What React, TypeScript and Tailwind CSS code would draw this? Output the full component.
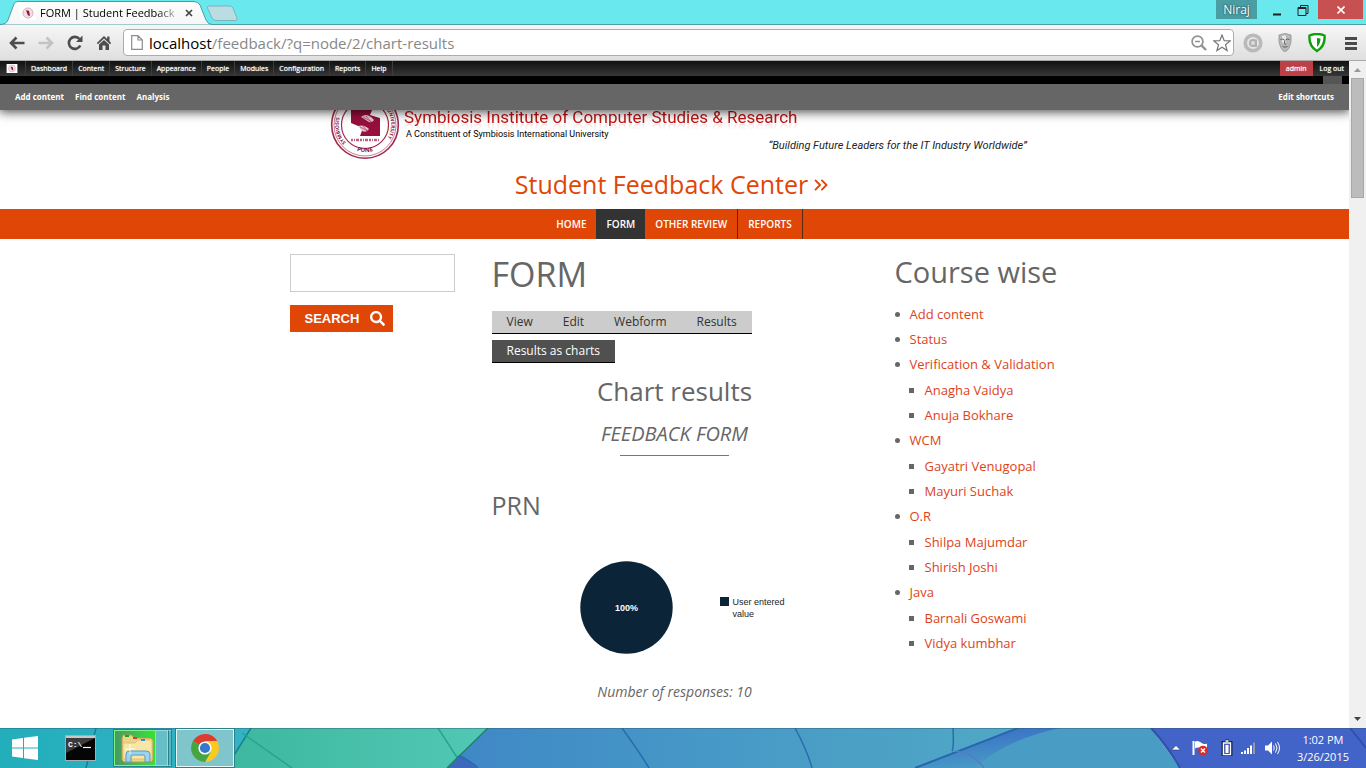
import { ChevronsRight } from "lucide-react";
import { FaSearch } from "react-icons/fa";

const adminLinks = ["Dashboard", "Content", "Structure", "Appearance", "People", "Modules", "Configuration", "Reports", "Help"];

const courses: { name: string; staff?: string[] }[] = [
  { name: "Add content" },
  { name: "Status" },
  { name: "Verification & Validation", staff: ["Anagha Vaidya", "Anuja Bokhare"] },
  { name: "WCM", staff: ["Gayatri Venugopal", "Mayuri Suchak"] },
  { name: "O.R", staff: ["Shilpa Majumdar", "Shirish Joshi"] },
  { name: "Java", staff: ["Barnali Goswami", "Vidya kumbhar"] },
];

function Crest({ className }: { className: string }) {
  return (
    <svg className={className} viewBox="0 0 12 10" aria-hidden="true">
      <rect width="12" height="10" fill="#fff" />
      <circle cx="6" cy="5" r="3.8" fill="#f0dfe4" stroke="#caa3b0" strokeWidth=".6" />
      <path d="M4.500 3l2.200.3.8 3.700-1.500-.2z" fill="#8a1238" />
    </svg>
  );
}

function TabStrip() {
  return (
    <div className="relative flex h-6 shrink-0 justify-between bg-[#69e8ee]">
      <svg className="absolute left-0 top-0" width="240" height="25" aria-hidden="true">
        <defs>
          <linearGradient id="tab" x2="0" y2="1">
            <stop stopColor="#fdfdfd" />
            <stop offset="1" stopColor="#f6f6f6" />
          </linearGradient>
        </defs>
        <path d="M0 25V24.500Q6 24.500 8 20L14 4Q15 1.500 18 1.500H194Q198 1.500 200 5L206 20Q208 24.500 212 24.500V25z" fill="url(#tab)" stroke="#4d9ea4" />
        <path d="M209 6H229Q232 6 233 8L237 18Q238 20.500 235 20.500H216Q213 20.500 212 18L207.500 8Q207 6 209 6z" fill="#b9dde3" stroke="#7fb3ba" />
      </svg>
      <div className="relative flex h-6 w-[208px] items-center pl-[20px] pt-[2px]">
        <Crest className="h-4 w-4" />
        <span className="ml-1 w-[137px] whitespace-nowrap text-[11px] text-black [mask-image:linear-gradient(to_right,#000_85%,rgba(0,0,0,0.2))]">
          FORM | Student Feedback
        </span>
        <button aria-label="Close tab" className="ml-2">
          <svg width="8" height="8" viewBox="0 0 8 8"><path d="M1 1l6 6M7 1L1 7" stroke="#444" strokeWidth="1.700" /></svg>
        </button>
      </div>
      <div className="flex h-[19px]">
        <button className="w-[41px] bg-[#4a9da2] text-[12px] leading-[18px] text-white [text-shadow:0_0_2px_#123]">Niraj</button>
        <button aria-label="Minimize" className="ml-3 w-6"><svg width="16" height="16"><path d="M4 12.500h8" stroke="#222" strokeWidth="2" /></svg></button>
        <button aria-label="Restore" className="ml-[2px] w-[23px]">
          <svg width="16" height="16"><path d="M3 5.500h8v8H3zM5.500 5V3.500h7.500v8h-2" fill="none" stroke="#222" /><path d="M3 6h8" stroke="#222" strokeWidth="2" /></svg>
        </button>
        <button aria-label="Close" className="flex w-[45px] items-center justify-center bg-[#c75050]">
          <svg width="8" height="8"><path d="M.5.5l7 7M7.500.5l-7 7" stroke="#fff" strokeWidth="1.600" /></svg>
        </button>
        <span className="w-[3px]" />
      </div>
    </div>
  );
}

function AddressBar() {
  return (
    <div className="flex h-[37px] shrink-0 items-center border-t border-b border-t-[#4d9ea4] border-b-[#a9a9a9] bg-linear-to-b from-[#f6f6f6] to-[#dfdfdf] pl-[9px] pr-2">
      <button aria-label="Back" className="mr-[13px]">
        <svg width="16" height="14" viewBox="0 0 16 14"><path d="M15.500 7H2M7.500 1.500L2 7l5.500 5.500" fill="none" stroke="#4d4d4d" strokeWidth="2.600" /></svg>
      </button>
      <button aria-label="Forward" className="mr-[13px]">
        <svg width="16" height="14" viewBox="0 0 16 14"><path d="M.5 7H14M8.500 1.500L14 7l-5.500 5.500" fill="none" stroke="#c3c3c3" strokeWidth="2.600" /></svg>
      </button>
      <button aria-label="Reload" className="mr-[13px]">
        <svg width="16" height="16" viewBox="0 0 16 16"><path d="M13.300 10.500A6 6 0 1 1 12.500 4" fill="none" stroke="#4d4d4d" strokeWidth="2.600" /><path d="M15.500.5v6.500h-6.500z" fill="#4d4d4d" /></svg>
      </button>
      <button aria-label="Home" className="mr-[11px]">
        <svg width="16" height="16" viewBox="0 0 16 16"><path d="M8 1L.8 8l1.200 1.200L8 3.600l6 5.600L15.200 8 13.500 6.300V1.500h-2.300v2.600z" fill="#4d4d4d" /><path d="M3 9.500L8 5l5 4.500V15H9.500v-4.500h-3V15H3z" fill="#4d4d4d" /></svg>
      </button>
      <div className="flex h-[27px] min-w-0 flex-1 items-center rounded-sm border border-[#acacac] bg-white px-[7px]">
        <svg width="12" height="15" viewBox="0 0 12 15" aria-hidden="true"><path d="M.7.700h6.300L11.300 5v9.300H.700zM7 .7V5h4.300" fill="none" stroke="#8c8c8c" strokeWidth="1.200" /></svg>
        <div className="ml-[6px] flex-1 whitespace-nowrap text-[15px] leading-[22px] text-[#888]"><span className="text-black">localhost</span>/feedback/?q=node/2/chart-results</div>
        <button aria-label="Zoom" className="mr-[6px]">
          <svg width="16" height="16" viewBox="0 0 16 16"><circle cx="6.500" cy="6.500" r="5.400" fill="none" stroke="#929292" strokeWidth="1.700" /><path d="M10.500 10.500l4.500 4.500" stroke="#929292" strokeWidth="2.400" /><path d="M4 6.500h5" stroke="#929292" strokeWidth="1.500" /></svg>
        </button>
        <button aria-label="Bookmark" className="-mr-[5px]">
          <svg width="18" height="18" viewBox="0 0 18 18"><path d="M9 1l2.200 5.600 6 .3-4.700 3.800 1.600 5.900L9 13.300l-5.100 3.300 1.600-5.900L.8 6.900l6-.3z" fill="none" stroke="#777" strokeWidth="1.200" /></svg>
        </button>
      </div>
      <svg className="ml-[9px]" width="20" height="20" viewBox="0 0 20 20" aria-hidden="true"><circle cx="10" cy="10" r="7.800" fill="#e4e4e4" stroke="#b9b9b9" strokeWidth="3.600" /><circle cx="10" cy="10" r="3" fill="#ddd" stroke="#b0b0b0" strokeWidth="2" /><path d="M13 6.500V14" stroke="#b0b0b0" strokeWidth="2" /></svg>
      <svg className="ml-[15px]" width="14" height="19" viewBox="0 0 14 19" aria-hidden="true">
        <path d="M1 2Q7-1 13 2Q14 10 11 15Q9 18.500 7 18.500Q5 18.500 3 15Q0 10 1 2z" fill="#b8b8b8" stroke="#8a8a8a" strokeWidth=".7" />
        <path d="M4 3q3-1.500 4 0v6l-2 3-2-3z" fill="#e6e6e6" />
        <path d="M2.500 6.500q2-1 3.500.2M8 6.700q1.500-1.200 3.500-.2M7 6.500l-.8 4.500h2M4.500 13.500q2.500 1.400 5 0" fill="none" stroke="#555" strokeWidth=".9" />
      </svg>
      <svg className="ml-[16px]" width="18" height="20" viewBox="0 0 18 20" aria-hidden="true"><path d="M1.500 2.500Q9-.5 16.500 2.500Q17.500 13 9 18Q.5 13 1.500 2.500z" fill="#fff" stroke="#0aa00a" strokeWidth="2.400" /><path d="M9 5q2 0 3.500.8Q12.500 11 9 14z" fill="#0aa00a" /></svg>
      <button aria-label="Menu" className="ml-[18px]">
        <svg width="14" height="14"><path d="M1 2.500h12M1 7.500h12M1 12.500h12" stroke="#4a4a4a" strokeWidth="2.800" /></svg>
      </button>
    </div>
  );
}

function AdminToolbar() {
  return (
    <div className="relative z-10 shadow-[0_1px_10px_1px_rgba(0,0,0,0.7)]">
      <div className="flex h-[15px] items-center bg-linear-to-b from-[#101211] to-[#363636] text-[7px] text-white">
        <a href="#home" aria-label="Home" className="ml-[6px] mr-[7px]"><Crest className="h-[9px] w-3" /></a>
        <nav aria-label="Administration" className="flex border-l border-[#3c3c3c]">
          {adminLinks.map((l) => (
            <a key={l} href="#admin" className="border-r border-[#3c3c3c] px-[5px] leading-[15px] [text-shadow:0_0_1px_#fff]">{l}</a>
          ))}
        </nav>
        <a href="#admin" className="ml-auto bg-[#bd4046] px-[6px] leading-[15px] [text-shadow:0_0_1px_#fff]">admin</a>
        <a href="#logout" className="pl-[7px] pr-[5px] leading-[15px] [text-shadow:0_0_1px_#fff]">Log out</a>
      </div>
      <div className="flex h-2 justify-end bg-black pr-[7px]"><span className="w-[19px] bg-[#555]" /></div>
      <div className="flex h-[26px] items-center gap-[11px] bg-[#666] pl-[15px] pr-[15px] text-[8px] font-bold text-white">
        <a href="#add">Add content</a>
        <a href="#find">Find content</a>
        <a href="#analysis">Analysis</a>
        <a href="#edit" className="ml-auto">Edit shortcuts</a>
      </div>
    </div>
  );
}

function Seal() {
  return (
    <svg className="shrink-0" width="70" height="50" viewBox="330 110 70 50" role="img" aria-label="Symbiosis University seal">
      <defs>
        <path id="leftArc" d="M359 150A26 26 0 0 1 352 102" />
        <path id="rightArc" d="M378 102A26 26 0 0 1 371 150" />
        <path id="footArc" d="M343 142A29 29 0 0 0 387 142" />
      </defs>
      <circle cx="365" cy="125" r="33.300" fill="#fff" stroke="#a02a4e" strokeWidth="1.600" />
      <circle cx="365" cy="125" r="31" fill="none" stroke="#a02a4e" strokeWidth=".6" />
      <circle cx="365" cy="125" r="23.500" fill="none" stroke="#a02a4e" strokeWidth="1.200" />
      <path d="M351 108h22l-3 7 10 3v18h-20l3-8-12-5z" fill="#970f3c" />
      <path d="M361 117q6-5 13 3q-2 3-5 2zM358 126q6-2 11 3q-2 4-7 2z" fill="#e5c3ce" />
      <path d="M363 117l9 5M366 116l5 6M360 127l8 4M363 126l4 5" stroke="#970f3c" strokeWidth=".5" />
      <path d="M351 140h28" stroke="#b8647f" strokeWidth="2.500" strokeDasharray="2 1 1 1 3 1" />
      <text fontFamily="Open Sans, sans-serif" fontSize="5" fontWeight="700" fill="#8a1238"><textPath href="#leftArc" startOffset="15">SYMBIOSIS</textPath></text>
      <text fontFamily="Open Sans, sans-serif" fontSize="5" fontWeight="700" fill="#8a1238"><textPath href="#rightArc" startOffset="12">UNIVERSITY</textPath></text>
      <text fontFamily="Open Sans, sans-serif" fontSize="6" fontWeight="700" fill="#8a1238"><textPath href="#footArc" startOffset="50%" textAnchor="middle">PUNE</textPath></text>
    </svg>
  );
}

function Header() {
  return (
    <header className="mx-auto w-full max-w-[689px]">
      <div className="flex h-[50px]">
        <Seal />
        <div className="-mt-[4px] flex flex-1 flex-col pl-1 font-[Roboto,sans-serif]">
          <div className="whitespace-nowrap text-[17px] leading-[22px] text-[#c41212] [-webkit-box-reflect:below_-9px_linear-gradient(transparent_50%,rgba(0,0,0,0.25))]">
            Symbiosis Institute of Computer Studies &amp; Research
          </div>
          <div className="relative pl-[2px] text-[9px] leading-3 text-black">A Constituent of Symbiosis International University</div>
          <div className="-mr-2 text-right text-[11px] italic leading-3 text-[#222]">“Building Future Leaders for the IT Industry Worldwide”</div>
        </div>
      </div>
      <a href="#center" className="mt-[7px] flex h-[42px] items-start justify-center gap-[2px] whitespace-nowrap pr-[2px] text-[25px] leading-[34px] text-[#e04605]">
        Student Feedback Center
        <ChevronsRight className="mt-[7px]" size={22} strokeWidth={2} />
      </a>
    </header>
  );
}

function Search() {
  return (
    <form className="flex flex-col items-start gap-[13px]" onSubmit={(e) => e.preventDefault()}>
      <input type="search" aria-label="Search" className="h-[38px] w-full border border-[#ccc] bg-white px-2 text-[13px] outline-none" />
      <button className="flex h-[27px] items-center gap-[11px] bg-[#e04605] pl-[15px] pr-2 font-['Liberation_Sans',sans-serif] text-[13px] font-bold text-white">
        SEARCH <FaSearch size={15} />
      </button>
    </form>
  );
}

function Results() {
  return (
    <main>
      <h1 className="text-[34px] leading-[41px]">FORM</h1>
      <nav aria-label="Tabs" className="mt-4 inline-flex border-b border-black bg-[#ccc] align-top text-[12px] leading-[22px] text-[#333]">
        {["View", "Edit", "Webform", "Results"].map((t) => (
          <a key={t} href="#tab" className="px-[15px]">{t}</a>
        ))}
      </nav>
      <div className="mt-[6px] flex">
        <a href="#charts" className="border-b border-black bg-[#505050] px-[15px] text-[12px] font-medium leading-[22px] text-white">Results as charts</a>
      </div>
      <div className="flex flex-col items-center">
        <h2 className="mt-[9px] text-[26px] leading-[38px]">Chart results</h2>
        <h3 className="mt-[10px] text-[20px] italic leading-[28px]">FEEDBACK FORM</h3>
        <hr className="mt-[7px] w-[109px] border-[#777]" />
      </div>
      <h2 className="mt-[32px] text-[25px] leading-[34px]">PRN</h2>
      <figure className="ml-[88px] mt-[39px] flex items-start font-['Liberation_Sans',sans-serif] text-[9px]">
        <svg width="93" height="93" viewBox="0 0 93 93" role="img" aria-label="Pie chart">
          <circle cx="46.500" cy="46.500" r="46.200" fill="#0c2438" />
          <text x="46.500" y="49.500" textAnchor="middle" fontSize="9" fontWeight="700" fill="#fff">100%</text>
        </svg>
        <figcaption className="ml-[47px] mt-[35px] flex gap-1 leading-3 text-[#222]">
          <span className="mt-px size-[9px] shrink-0 bg-[#0c2438]" />
          <span className="w-[60px]">User entered value</span>
        </figcaption>
      </figure>
      <p className="mt-[28px] text-center text-[14px] italic leading-[20px]">Number of responses: 10</p>
    </main>
  );
}

function Courses() {
  return (
    <aside className="whitespace-nowrap">
      <h2 className="text-[29px] leading-[36px]">Course wise</h2>
      <ul className="mt-3 text-[13px] leading-[25px] text-[#dd4319]">
        {courses.map((c) => (
          <li key={c.name}>
            <div className="flex items-center gap-[10px] before:size-[5px] before:rounded-full before:bg-[#666]"><a href="#course">{c.name}</a></div>
            {c.staff && (
              <ul className="mt-px pl-[14px]">
                {c.staff.map((s) => (
                  <li key={s} className="flex items-center gap-[11px] before:size-[5px] before:bg-[#666]"><a href="#staff">{s}</a></li>
                ))}
              </ul>
            )}
          </li>
        ))}
      </ul>
    </aside>
  );
}

function ScrollBar() {
  return (
    <div className="flex w-[17px] shrink-0 flex-col items-center bg-[#f0f0f0]" aria-hidden="true">
      <svg width="17" height="17"><path d="M5 11l3.500-4 3.500 4z" fill="#999" /></svg>
      <div className="h-[120px] w-[13px] border border-[#a8a8a8] bg-[#bcbcbc]" />
      <svg className="mt-auto" width="17" height="17"><path d="M5 6l3.500 4L12 6z" fill="#444" /></svg>
    </div>
  );
}

function Wallpaper() {
  return (
    <svg className="absolute inset-0 h-full w-full" viewBox="0 0 1366 40" preserveAspectRatio="none" aria-hidden="true">
      <defs>
        <linearGradient id="teal"><stop stopColor="#22aebb" /><stop offset="1" stopColor="#35b3c6" /></linearGradient>
        <linearGradient id="green"><stop stopColor="#3db79f" /><stop offset="1" stopColor="#52c8b4" /></linearGradient>
        <linearGradient id="sea"><stop stopColor="#3f87c6" /><stop offset=".5" stopColor="#479ac6" /><stop offset="1" stopColor="#50a8c5" /></linearGradient>
        <linearGradient id="fold" x1="0" y1="0" x2=".35" y2="1"><stop stopColor="#3768c6" /><stop offset="1" stopColor="#489ac5" /></linearGradient>
      </defs>
      <rect width="260" height="40" fill="url(#teal)" />
      <path d="M251 0H490L447 40H226z" fill="url(#green)" />
      <path d="M96 0L86 40M251 0L226 40" stroke="#157f93" strokeWidth="1.500" fill="none" />
      <path d="M242 5L292 40M438 0L460 34" stroke="#25a58a" strokeWidth="1.500" />
      <path d="M488 0H1018L915 40H447z" fill="url(#sea)" />
      <path d="M458 28L447 40h30Q463 25 458 28z" fill="#3d69bd" />
      <path d="M488 0L447 40" stroke="#1f8465" strokeWidth="1.500" />
      <path d="M622 0Q640 25 649 40M795 0Q807 22 812 40M953 0Q954 20 952 23M458 28Q470 32 478 40" stroke="#2a6bb0" strokeWidth="1.500" fill="none" />
      <path d="M1018 0H1151L1180 40H915z" fill="#499dc4" />
      <path d="M1018 0H1060Q1005 12 975 40H915z" fill="url(#fold)" />
      <path d="M1018 0L915 40" stroke="#2766ae" strokeWidth="2" />
      <path d="M955 23Q973 25 984 40" stroke="#547dc6" strokeWidth="1.500" fill="none" />
      <path d="M1151 0H1366V40H1180z" fill="#4263c7" />
      <path d="M1151 0Q1168 18 1180 40M1350 0L1366 20" stroke="#3052ab" strokeWidth="2" fill="none" />
      <path d="M0 .5H1366" stroke="#2d5b78" strokeOpacity=".45" />
    </svg>
  );
}

function TaskBar() {
  return (
    <div className="relative flex h-10 shrink-0 items-center">
      <Wallpaper />
      <button aria-label="Start" className="relative ml-[11px]">
        <svg width="28" height="26" viewBox="0 0 28 26"><path d="M1 4.500L12 3v9.500H1zM13 2.800L27 1v11.500H13zM1 13.500h11V23L1 21.500zM13 13.500h14V25l-14-1.800z" fill="#fff" /></svg>
      </button>
      <button aria-label="Command Prompt" className="relative ml-[26px]">
        <svg width="31" height="26" viewBox="0 0 31 26">
          <rect x=".5" y=".5" width="30" height="25" fill="#050505" stroke="#a5adb5" />
          <path d="M1 1h29v2H1z" fill="#c5c9cd" /><path d="M1 3h29L1 18z" fill="#3c3c3c" />
          <text x="3" y="12" fontFamily="Liberation Mono, monospace" fontSize="8" fontWeight="700" fill="#fff">C:\</text>
          <path d="M18 12.500h8" stroke="#fff" strokeWidth="1.200" />
        </svg>
      </button>
      <button aria-label="File Explorer" className="relative ml-[17px] flex h-[38px] w-[59px] border border-[#2a8188]">
        <span className="flex w-[42px] items-center justify-end border border-[#7ff27f] bg-linear-to-r from-[#459a63] to-[#34e32c]">
          <svg width="34" height="30" viewBox="0 0 34 30">
            <path d="M1 5l1-3h9l2 3h17l2 2v20l-2 2H3l-2-2z" fill="#efd384" stroke="#b9994e" />
            <path d="M2 10h12l3-3h14v19H2z" fill="#f8e6a6" stroke="#d7b765" strokeWidth=".7" />
            <path d="M4 2h4v2H4z" fill="#13a338" /><path d="M12 4h4v2h-4z" fill="#d5432c" /><path d="M20 6h4v2h-4z" fill="#2a90dc" />
            <path d="M5 29v-8q0-3 4-3h16q4 0 4 3v8h-5v-5q0-2-2-2H12q-2 0-2 2v5z" fill="#9bd4ed" stroke="#5999c2" />
            <path d="M9 11v10M4 16h10" stroke="#fff" strokeWidth=".8" />
          </svg>
        </span>
        <span className="w-3 border-y border-r border-[#9bd8de] bg-[#68bec7]" />
        <span className="flex-1 border-y border-[#9bd8de] border-l border-l-[#2a8188] bg-[#55b9c3]" />
      </button>
      <button aria-label="Google Chrome" className="relative ml-[4px] flex h-[38px] w-[58px] items-center justify-center border border-[#e8f7f8] bg-[#80c4cc] outline outline-[#2a8188]">
        <svg width="28" height="28" viewBox="0 0 28 28">
          <path d="M14 14L1.900 7A14 14 0 0 1 26.100 7z" fill="#db3e2d" />
          <path d="M14 14L14 0A14 14 0 0 1 26.100 7H14z" fill="#db3e2d" />
          <path d="M14 7h12.100A14 14 0 0 1 14 28l6-10.500z" fill="#fdc91d" />
          <path d="M1.900 7A14 14 0 0 0 14 28l6-10.500L14 14z" fill="#47a541" />
          <circle cx="14" cy="14" r="6.600" fill="#fff" /><circle cx="14" cy="14" r="5.100" fill="#3878ca" />
        </svg>
      </button>
      <div className="relative ml-auto flex items-center pr-[17px] text-white">
        <svg width="110" height="18" viewBox="1170 0 110 18" aria-hidden="true">
          <path d="M1171.500 11l4.500-4.500 4.500 4.500z" fill="#fff" stroke="#26345e" strokeWidth=".6" />
          <path d="M1193.500 2v14" stroke="#fff" strokeWidth="2" /><path d="M1195 2.500q3-1.500 6 1t6 1v6q-3 1-6-1t-6 0z" fill="#fff" />
          <circle cx="1203" cy="11.500" r="4.800" fill="#db2b25" /><path d="M1201 9.500l4 4M1205 9.500l-4 4" stroke="#fff" strokeWidth="1.500" />
          <path d="M1223 3.500h8v12h-8zM1225 2h4" fill="none" stroke="#17244f" strokeWidth="3" /><path d="M1223.500 4h7v11.500h-7zM1225.500 2h3" fill="none" stroke="#fff" strokeWidth="1.400" /><path d="M1225.500 6h3v8h-3z" fill="#fff" />
          <path d="M1242 13v2M1245 11.500V15M1248 9v6M1251 6.500V15" stroke="#fff" strokeWidth="2" /><path d="M1254 3.500V15" stroke="#999" strokeWidth="2" />
          <path d="M1265 6.500h3l4-4v13l-4-4h-3z" fill="#fff" /><path d="M1273.500 6.500q1.500 2.500 0 5M1275.500 4.500q3 4.500 0 9M1277.500 3q4 6 0 12" stroke="#fff" strokeWidth="1" fill="none" />
        </svg>
        <time className="ml-[17px] text-center text-[11px] leading-[17px]">1:02 PM<br />3/26/2015</time>
      </div>
    </div>
  );
}

export default function App() {
  return (
    <div className="flex h-screen flex-col overflow-hidden bg-white font-['Open_Sans',sans-serif]">
      <TabStrip />
      <AddressBar />
      <div className="flex min-h-0 flex-1">
        <div className="min-w-0 flex-1 overflow-hidden text-[#666]">
          <AdminToolbar />
          <Header />
          <nav aria-label="Main" className="flex h-[30px] justify-center bg-[#e04605] text-[10px] font-semibold leading-[30px] text-white">
            <a href="#home" className="px-[10px]">HOME</a>
            <a href="#form" className="bg-[#333] px-[10px]">FORM</a>
            <a href="#other" className="border-r border-[#5a2a10] px-[10px]">OTHER REVIEW</a>
            <a href="#reports" className="border-r border-[#5a2a10] px-[10px]">REPORTS</a>
          </nav>
          <div className="mx-auto grid max-w-[770px] grid-cols-[165px_1fr_165px] gap-[37px] pt-[15px]">
            <Search />
            <Results />
            <Courses />
          </div>
        </div>
        <ScrollBar />
      </div>
      <TaskBar />
    </div>
  );
}
